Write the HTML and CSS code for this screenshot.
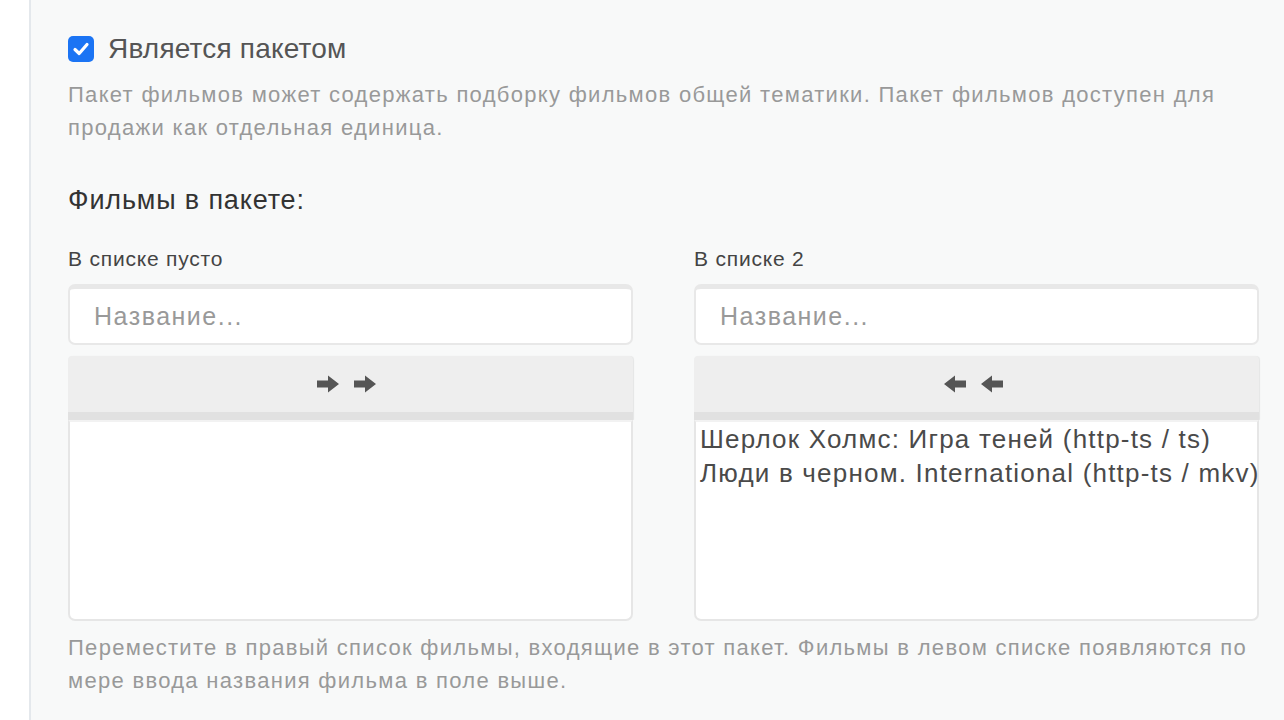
FILE: index.html
```html
<!DOCTYPE html>
<html lang="ru">
<head>
    <meta charset="UTF-8">
    <title>Пакет фильмов</title>
    <link rel="stylesheet" href="styles.css">
</head>
<body>
    <div class="sidebar"></div>

    <div class="main">
        <!-- Package checkbox -->
        <label class="check-row">
            <span class="checkbox">
                <svg width="20" height="20" viewBox="0 0 20 20"><path d="M4 10.5 L8.2 14.5 L16 5.5" fill="none" stroke="#fff" stroke-width="3.2" stroke-linecap="round" stroke-linejoin="round"/></svg>
            </span>
            <span class="check-label">Является пакетом</span>
        </label>
        <p class="help">Пакет фильмов может содержать подборку фильмов общей тематики. Пакет фильмов доступен для продажи как отдельная единица.</p>

        <h3 class="section-title">Фильмы в пакете:</h3>

        <div class="dual-list">
            <div class="list-col">
                <div class="list-caption">В списке пусто</div>
                <input class="search" type="text" placeholder="Название...">
                <button class="move-btn">
                    <svg class="arrow" width="23" height="18" viewBox="0 0 23 18"><path d="M0 5.5 H11 V0.5 L22 9 L11 17.5 V12.5 H0 Z" fill="#555"/></svg>
                    <svg class="arrow" width="23" height="18" viewBox="0 0 23 18"><path d="M0 5.5 H11 V0.5 L22 9 L11 17.5 V12.5 H0 Z" fill="#555"/></svg>
                </button>
                <div class="list-box"></div>
            </div>

            <div class="list-col">
                <div class="list-caption">В списке 2</div>
                <input class="search" type="text" placeholder="Название...">
                <button class="move-btn">
                    <svg class="arrow" width="23" height="18" viewBox="0 0 23 18"><path d="M23 5.5 H12 V0.5 L1 9 L12 17.5 V12.5 H23 Z" fill="#555"/></svg>
                    <svg class="arrow" width="23" height="18" viewBox="0 0 23 18"><path d="M23 5.5 H12 V0.5 L1 9 L12 17.5 V12.5 H23 Z" fill="#555"/></svg>
                </button>
                <div class="list-box">
                    <div class="list-item">Шерлок Холмс: Игра теней (http-ts / ts)</div>
                    <div class="list-item">Люди в черном. International (http-ts / mkv)</div>
                </div>
            </div>
        </div>

        <p class="help help-bottom">Переместите в правый список фильмы, входящие в этот пакет. Фильмы в левом списке появляются по мере ввода названия фильма в поле выше.</p>
    </div>
</body>
</html>
```

FILE: styles.css
```css
body {
    margin: 0;
    padding: 0;
    display: flex;
    min-height: 720px;
    font-family: "Liberation Sans", Arial, sans-serif;
    background-color: #fff;
}

.sidebar {
    width: 29px;
    flex: 0 0 29px;
    background: #fff;
}

.main {
    flex: 1;
    min-width: 0;
    background: #f8f9f9;
    border-left: 2px solid #e4e8ec;
    padding: 36px 25px 0 37px;
}

.check-row {
    display: flex;
    align-items: center;
    gap: 14px;
    height: 26px;
}

.checkbox {
    width: 26px;
    height: 26px;
    border-radius: 5px;
    background: #1b74f4;
    display: flex;
    align-items: center;
    justify-content: center;
}

.check-label {
    font-size: 28px;
    letter-spacing: 0.2px;
    color: #555;
}

.help {
    margin: 16px 0 0;
    font-size: 22px;
    letter-spacing: 1.3px;
    line-height: 33px;
    color: #999;
}

.section-title {
    margin: 41px 0 0;
    font-size: 27px;
    letter-spacing: 0.85px;
    line-height: 30px;
    font-weight: normal;
    color: #333;
}

.dual-list {
    display: flex;
    gap: 61px;
    margin-top: 32px;
}

.list-col {
    flex: 1 1 0;
    min-width: 0;
    display: flex;
    flex-direction: column;
}

.list-caption {
    font-size: 21px;
    letter-spacing: 0.8px;
    line-height: 24px;
    color: #444;
}

.search {
    margin-top: 13px;
    height: 61px;
    width: 100%;
    box-sizing: border-box;
    border: 2px solid #e8e8e8;
    border-top-width: 5px;
    border-radius: 7px;
    background: #fff;
    padding: 0 24px;
    font-family: inherit;
    font-size: 25px;
    letter-spacing: 1.5px;
    color: #444;
    outline: none;
}

.search::placeholder {
    color: #999;
}

.move-btn {
    margin-top: 11px;
    height: 64px;
    box-sizing: border-box;
    border: none;
    border-bottom: 8px solid #e1e1e1;
    border-radius: 4px 4px 0 0;
    background: #eeeeee;
    box-shadow: 1px 0 1px rgba(0, 0, 0, 0.08);
    display: flex;
    align-items: center;
    justify-content: center;
    gap: 14px;
    padding: 0 8px 0 0;
}

.list-box {
    height: 201px;
    box-sizing: border-box;
    border: 2px solid #e6e6e6;
    border-top-color: #f2f2f2;
    border-radius: 0 0 7px 7px;
    background: #fff;
    padding: 0 4px;
}

.list-item {
    font-size: 26px;
    letter-spacing: 1.2px;
    line-height: 34px;
    color: #4a4a4a;
    white-space: nowrap;
}

.help-bottom {
    margin-top: 10px;
}
```
